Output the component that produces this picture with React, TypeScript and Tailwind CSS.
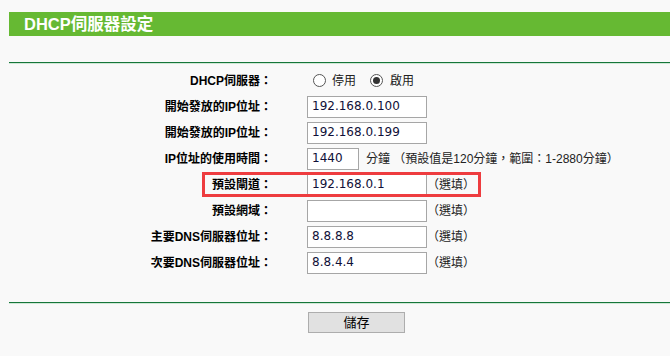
const labelFont = '[font-family:"Liberation_Sans","Noto_Sans_CJK_TC",sans-serif]';

function Radio({ checked }: { checked?: boolean }) {
  return (
    <span className="flex h-[13px] w-[13px] items-center justify-center rounded-full border border-[#555] bg-white">
      {checked && <span className="h-[7px] w-[7px] rounded-full bg-[#333]" />}
    </span>
  );
}

function Field({ label, value, width = 'w-[120px]', after, afterGap = 'ml-[7px]', children }: {
  label: string;
  value?: string;
  width?: string;
  after?: string;
  afterGap?: string;
  children?: React.ReactNode;
}) {
  return (
    <div className="relative flex h-[26px] items-center">
      {children}
      <div className="w-[272px] text-right text-[12px] font-bold text-black">{label}</div>
      <div
        className={`ml-[35px] flex h-[22px] ${width} items-end border border-[#a6a6a6] bg-white pb-[2px] pl-[4px] text-[12px] text-[#101038] [font-family:"DejaVu_Sans",sans-serif]`}
      >
        {value}
      </div>
      {after && <div className={`${afterGap} text-[12px] text-[#222]`}>{after}</div>}
    </div>
  );
}

export default function App() {
  return (
    <div className={`min-h-screen bg-[#f9f9f9] pt-3 ${labelFont}`}>
      <div className="ml-[9px] flex h-6 items-center bg-[#66b933] pl-[15px] text-[16.5px] font-bold text-white">
        DHCP伺服器設定
      </div>
      <div className="ml-[9px] mt-[26px] border-t border-b border-t-[#16763a] border-b-[#cfe8d6]" />

      <div className="mt-[3px] flex h-[27px] items-center">
        <div className="w-[272px] text-right text-[12px] font-bold text-black">DHCP伺服器：</div>
        <div className="ml-[41px] flex items-center text-[12px] text-[#222]">
          <Radio />
          <span className="ml-[6px]">停用</span>
          <span className="ml-[14px]"><Radio checked /></span>
          <span className="ml-[7px]">啟用</span>
        </div>
      </div>

      <Field label="開始發放的IP位址：" value="192.168.0.100" />
      <Field label="開始發放的IP位址：" value="192.168.0.199" />
      <Field label="IP位址的使用時間：" value="1440" width="w-[52px]" after="分鐘 （預設值是120分鐘，範圍：1-2880分鐘）" />
      <Field label="預設閘道：" value="192.168.0.1" after="（選填）" afterGap="ml-[0px]">
        <div className="pointer-events-none absolute left-[202px] top-0 h-[25px] w-[279px] border-[3px] border-[#ee3c3f]" />
      </Field>
      <Field label="預設網域：" value="" after="（選填）" afterGap="ml-[0px]" />
      <Field label="主要DNS伺服器位址：" value="8.8.8.8" after="（選填）" afterGap="ml-[0px]" />
      <Field label="次要DNS伺服器位址：" value="8.8.4.4" after="（選填）" afterGap="ml-[0px]" />

      <div className="ml-[9px] mt-[26px] border-t border-b border-t-[#16763a] border-b-[#cfe8d6]" />

      <div className="mt-[8px] flex">
        <button className="ml-[308px] h-[21px] w-[97px] border border-[#adadad] bg-[#e1e1e1] text-[13px] text-black">
          儲存
        </button>
      </div>
    </div>
  );
}
